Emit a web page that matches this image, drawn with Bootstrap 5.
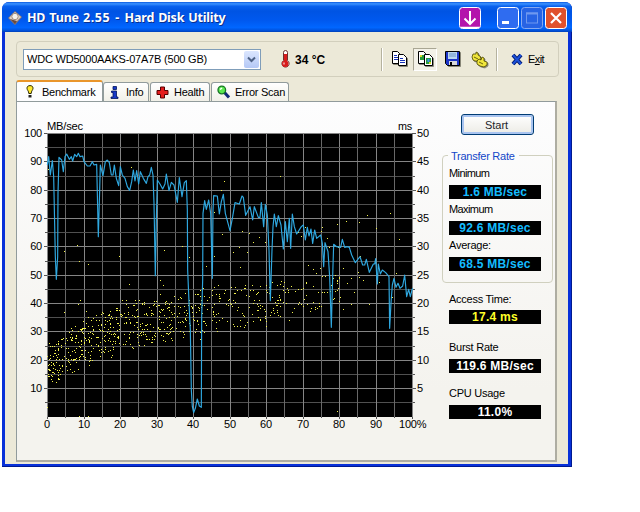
<!DOCTYPE html>
<html lang="en">
<head>
<meta charset="utf-8">
<title>HD Tune 2.55 - Hard Disk Utility</title>
<link href="https://cdn.jsdelivr.net/npm/bootstrap@5.3.0/dist/css/bootstrap.min.css" rel="stylesheet">
<style>
body{background:#fff;font:11px/14px "Liberation Sans",Arial,sans-serif;letter-spacing:-.25px;color:#000;overflow:hidden}
.win{width:570px;height:465px;margin:2px 0 0 2px;background:#0831d9;border-radius:7px 7px 0 0;padding:0 4px 3px 3px;box-shadow:inset -1px -1px #001a90}
.titlebar{height:30px;margin:0 -4px 0 -3px;padding:2px 5px 0 5px;border-radius:7px 7px 0 0;background:linear-gradient(#0a5ae0 0,#3c93ff 6%,#0a62ee 14%,#0054e3 30%,#0058ee 60%,#0066ff 85%,#0054e0 94%,#0040b8 100%)}
.caption{font:bold 12.5px/18px "Noto Sans","Open Sans",sans-serif;letter-spacing:-.2px;word-spacing:1px;color:#fff;text-shadow:1px 1px #0a2f8c;white-space:nowrap}
.caption .ver{letter-spacing:.6px}
.client{background:#ece9d8;height:432px;padding:9px 10px 0 11px}
.toolbox{height:36px;width:543px;border:1px solid #d2cfbd;border-radius:4px;padding:0 0 0 6px}
.combo{width:238px;height:21px;border:1px solid #7f9db9;background:#fff;padding-left:3px;letter-spacing:-.2px}
.drop{width:15px;height:17px;margin-right:1px;border-radius:2px;background:linear-gradient(#dbe6fe,#b4c8f6)}
.vsep{width:2px;height:23px;background:#b5b29f;border-right:1px solid #fff}
.pressed{width:24px;height:23px;border:1px solid;border-color:#a9a693 #fff #fff #a9a693;background:#f3f1e7}
.ico{filter:drop-shadow(1px 1px 0 rgba(70,68,55,.6))}
.tabs{height:24px;padding-top:4px}
.tabx{height:19px;margin-top:1px;border:1px solid #919b9c;border-bottom:0;border-radius:3px 3px 0 0;background:linear-gradient(#fff,#f1f0e8);white-space:nowrap}
.tabx.on{height:21px;margin-top:-1px;border-top:2px solid #e9952b;background:#fdfdfe;margin-bottom:-1px;position:relative;z-index:1}
.pane{height:361px;width:541px;border:1px solid #919b9c;border-right:2px solid #aeada2;border-bottom:2px solid #aeada2;background:linear-gradient(#fdfdfe,#f4f3ee 80%)}
.chart{display:block;letter-spacing:-.2px}
.side{width:112px;padding-top:12px}
.startbtn{width:73px;height:21px;margin-left:19px;border:1px solid #003c74;border-radius:3px;background:linear-gradient(#fff,#ecebe5);box-shadow:inset 0 0 0 2px #a9c4f0;padding:0 2px 0 0;font-size:11px;line-height:18px}
.group{height:128px;width:111px;margin-top:20px;border:1px solid #d0d0bf;border-radius:4px;padding-left:6px}
.legendx{margin:-7px 0 0 -1px;padding:0 3px;width:71px;background:#fbfbfb;color:#1246c8;white-space:nowrap}
.lbl{height:14px;line-height:14px}
.val{width:92px;height:14px;background:#000;text-align:center;font:bold 12px/14px "Liberation Sans",Arial,sans-serif;letter-spacing:.25px;white-space:nowrap}
.cy{color:#14bcff}.ye{color:#ffff28}.wh{color:#fff}
.tight{letter-spacing:-.6px}
</style>
<script src="https://cdn.jsdelivr.net/npm/bootstrap@5.3.0/dist/js/bootstrap.bundle.min.js"></script>
</head>
<body>
<div class="win">
  <header class="titlebar d-flex align-items-center">
    <svg width="16" height="16" viewBox="0 0 16 16"><path d="M1 8 8 1l7 6-7 8z" fill="#8b7770"/><path d="M2 8 8 2l6 5-6 6z" fill="#ddd0c4"/><circle cx="8" cy="6.500" r="3.200" fill="#f7f1ea" stroke="#a08c80"/><path d="m3 9 5 5 2-3z" fill="#6a4a40"/></svg>
    <span class="caption ms-1">HD Tune <span class="ver">2.55 - </span>Hard Disk Utility</span>
    <svg class="ms-auto" width="22" height="22"><rect x=".5" y=".5" width="21" height="21" rx="3" fill="#b414ac" stroke="#fff"/><path d="M11 4v13M5.500 11.500l5.500 5.500 5.500-5.500" fill="none" stroke="#fff" stroke-width="2"/><path d="M2 20.500h18" stroke="#fff" stroke-width="1.500"/></svg>
    <svg style="margin-left:16px" width="22" height="22"><rect x=".5" y=".5" width="21" height="21" rx="3" fill="#2f6cf0" stroke="#fff"/><path d="M5 15.500h7" stroke="#fff" stroke-width="3"/></svg>
    <svg style="margin-left:2px" width="22" height="22"><rect x=".5" y=".5" width="21" height="21" rx="3" fill="#2763e4" stroke="#86a9f0"/><rect x="5.500" y="6" width="11" height="10" fill="none" stroke="#6f98ef"/><path d="M5 6.500h12" stroke="#6f98ef" stroke-width="2"/></svg>
    <svg style="margin-left:2px" width="22" height="22"><rect x=".5" y=".5" width="21" height="21" rx="3" fill="#e0512c" stroke="#fff"/><path d="m6 6 10 10M16 6 6 16" stroke="#fff" stroke-width="2.200"/></svg>
  </header>
  <main class="client">
    <div class="toolbox d-flex align-items-center">
      <div class="combo d-flex align-items-center"><span>WDC WD5000AAKS-07A7B (500 GB)</span>
        <span class="drop ms-auto d-flex align-items-center justify-content-center"><svg width="9" height="7"><path d="m1 1.500 3.500 3.500L8 1.500" fill="none" stroke="#4d6185" stroke-width="2"/></svg></span></div>
      <svg style="margin-left:19px" width="10" height="18"><path d="M3.500 2.500q0-2 2-2t2 2v8a3.600 3.600 0 1 1-4 0z" fill="#fff" stroke="#6b3030"/><path d="M5.500 4v10" stroke="#d81c1c" stroke-width="3"/><circle cx="5.200" cy="13.800" r="3.200" fill="#d81c1c"/><path d="M4 12.500v2" stroke="#fff"/></svg>
      <b style="margin:2px 0 0 5px;font-size:12px;letter-spacing:0;white-space:nowrap">34 °C</b>
      <div class="vsep ms-auto"></div>
      <svg class="ico" style="margin-left:8px" width="17" height="16"><g stroke="#000"><path d="M1.500.5h5l2 2v10h-7z" fill="#fff"/><path d="M7.500 3.500h5l3 3v8h-8z" fill="#fff"/></g><path d="M3 4.500h3M3 6.500h4M3 8.500h4M9 7.500h3M9 9.500h5M9 11.500h5" stroke="#1732b8"/></svg>
      <div class="pressed d-flex align-items-center justify-content-center" style="margin-left:5px"><svg class="ico" width="17" height="16"><g stroke="#000" fill="#fff"><path d="M1.500.5h5l2 2v10h-7z"/><path d="M7.500 3.500h5l3 3v8h-8z"/></g><path d="M3 4h4v5H3zM9 7h5v6H9z" fill="#279a3c"/><path d="M10.500 8h2v3h-2z" fill="#3d8df0"/><path d="M3 4h2v2H3zM12 11h2v2h-2z" fill="#d8d82c"/></svg></div>
      <svg class="ico" style="margin-left:8px" width="17" height="16"><path d="M.5.5h14v14h-12l-2-2z" fill="#1d35c8" stroke="#000"/><path d="M3 1h9v7H3z" fill="#b9d6f0"/><path d="M4 10h8v4H4z" fill="#d8d8d8"/><path d="M5 11h2v3H5z" fill="#000"/><path d="M4 3h7M4 5h7" stroke="#6c94c8"/></svg>
      <svg class="ico" style="margin-left:9px" width="18" height="17"><g fill="#f0e63c" stroke="#4c4600" stroke-width=".8"><path d="m1 6 1-3 3 0 0-2 2 1 0 2 2 1 1 3-2 2-4 0-2-1z"/><path d="m6 10 2-2 2 1 1-3 2 1 0 3 3 1 0 3-3 2-4-1-3-2z"/></g><path d="m3 6 4 2M8 11l4 2" stroke="#6b6410"/></svg>
      <div class="vsep" style="margin-left:7px"></div>
      <svg style="margin-left:13px" width="12" height="13"><path d="m2 2 8 9M10 2l-8 9" stroke="#001a70" stroke-width="4"/><path d="m2 2 8 9M10 2l-8 9" stroke="#1c50d8" stroke-width="2"/></svg>
      <span style="margin:0 14px 0 5px;letter-spacing:-.6px">E<u>x</u>it</span>
    </div>
    <nav class="tabs d-flex">
      <div class="tabx on d-flex align-items-center" style="width:87px;padding-left:9px"><svg width="8" height="13"><path d="M4 .6c2 0 3 1 3 2.700C7 5 5.200 6 5.200 8.500H2.800C2.800 6 1 5 1 3.300 1 1.600 2 .6 4 .6z" fill="#ffe92e" stroke="#2a2600"/><path d="M2.500 10h3v2.500h-3z" fill="#222"/></svg><span style="margin-left:8px">Benchmark</span></div>
      <div class="tabx d-flex align-items-center" style="width:46px;padding-left:6px"><svg width="9" height="13"><path d="M3 .5h3.500v3H3zM1.500 5h5v6h1.500v1.500h-7V11h2V6.500H1.500z" fill="#1738c8" stroke="#00145c" stroke-width=".8"/></svg><span style="margin-left:7px">Info</span></div>
      <div class="tabx d-flex align-items-center" style="width:60px;padding-left:5px;margin-left:1px"><svg width="13" height="13"><path d="M4.500 1h4v3.500H12v4H8.500V12h-4V8.500H1v-4h3.500z" fill="#e41c1c" stroke="#500"/></svg><span style="margin-left:5px">Health</span></div>
      <div class="tabx d-flex align-items-center" style="width:78px;padding-left:5px;margin-left:1px"><svg width="13" height="14"><path d="m7 7 5 5.500" stroke="#122a78" stroke-width="3"/><circle cx="4.800" cy="5" r="3.800" fill="#5cea50" stroke="#177524" stroke-width="1.300"/><path d="M3 4.500 5 3" stroke="#fff" stroke-width="1.500"/></svg><span style="margin-left:5px">Error Scan</span></div>
    </nav>
    <section class="pane d-flex">
      <svg class="chart" width="425" height="357" viewBox="17 102 425 357" font-family="Liberation Sans,Arial,sans-serif" font-size="11">
        <rect x="47" y="133" width="366" height="284"/>
        <g id="grid" shape-rendering="crispEdges"></g>
        <g id="dots" fill="#f2f24c" shape-rendering="crispEdges"></g>
        <polyline transform="translate(10 110) scale(.33333)" fill="none" stroke="#2fa8e0" stroke-width="3.500" stroke-linejoin="round" points="112,165 116,140 121,195 127,152 131,200 136,440 139,508 143,440 144,250 147,142 155,150 160,185 165,140 170,132 178,148 184,140 188,153 194,133 200,140 205,130 210,140 218,138 222,155 232,168 240,168 247,155 252,165 260,163 265,380 269,240 271,165 279,197 286,155 292,150 298,158 304,195 309,195 313,165 319,205 326,227 331,170 337,195 345,205 352,230 359,241 365,215 370,180 375,213 380,182 386,222 391,185 400,205 409,220 414,200 419,195 424,172 429,195 432,280 436,497 439,330 442,210 450,222 458,237 465,222 469,192 477,242 484,217 492,225 502,277 508,203 516,260 523,218 529,212 532,300 533,480 538,600 541,660 544,840 547,890 551,908 556,895 562,867 568,888 574,892 575,620 578,510 579,310 584,272 589,298 596,270 602,310 607,505 609,300 611,257 622,258 628,312 634,275 640,253 646,310 660,362 668,320 675,278 688,282 696,258 700,262 707,316 720,290 728,330 733,290 745,322 750,322 754,278 761,350 766,283 772,315 777,420 781,572 786,420 789,350 793,312 799,350 805,317 813,345 820,417 826,335 832,395 838,325 842,415 847,312 853,350 860,372 874,350 880,345 886,390 892,352 897,378 903,357 908,400 914,360 920,385 932,375 937,400 941,470 945,398 954,425 959,500 964,652 968,500 971,403 980,410 992,412 997,388 1004,412 1012,410 1018,412 1025,435 1036,458 1050,440 1058,465 1064,465 1069,448 1078,487 1090,462 1094,462 1097,446 1102,522 1105,462 1111,492 1117,480 1127,488 1137,500 1139,655 1143,580 1147,525 1152,505 1158,532 1164,520 1170,535 1178,528 1184,495 1190,560 1196,538 1201,560 1206,540 1208,535"/>
        <text x="47" y="130" textLength="36" lengthAdjust="spacingAndGlyphs">MB/sec</text><text x="398" y="130" textLength="14" lengthAdjust="spacingAndGlyphs">ms</text>
        <g id="axes" letter-spacing="-.2"></g>
      </svg>
      <div class="side">
        <button class="startbtn btn d-block">Start</button>
        <div class="group">
          <div class="legendx">Transfer Rate</div>
          <div class="lbl tight" style="margin-top:3px">Minimum</div><div class="val cy" style="margin-top:5px">1.6 MB/sec</div>
          <div class="lbl tight" style="margin-top:3px">Maximum</div><div class="val cy" style="margin-top:5px">92.6 MB/sec</div>
          <div class="lbl" style="margin-top:3px">Average:</div><div class="val cy" style="margin-top:5px">68.5 MB/sec</div>
        </div>
        <div style="padding-left:7px">
          <div class="lbl" style="margin-top:9px">Access Time:</div><div class="val ye" style="margin-top:4px">17.4 ms</div>
          <div class="lbl" style="margin-top:16px">Burst Rate</div><div class="val wh" style="margin-top:5px">119.6 MB/sec</div>
          <div class="lbl" style="margin-top:13px">CPU Usage</div><div class="val wh" style="margin-top:5px">11.0%</div>
        </div>
      </div>
    </section>
  </main>
</div>
<script>
const X = p => 47 + p * 3.65, Y = v => 416.5 - v * 2.835;
let grid = '', axes = '';
for (let i = 0; i <= 20; i++) {
  const x = Math.round(X(i * 5)), y = Math.round(Y(i * 5)), c = i % 2 ? '#505050' : '#858585';
  grid += `<path d="M${x + .5} 133V417" stroke="${i % 2 ? '#686868' : '#858585'}"/>`;
  if (i) grid += `<path d="M47 ${y + .5}H413" stroke="${c}"/>`;
  if (i) grid += `<path d="M${i % 2 ? 45 : 44} ${y + .5}h3M412 ${y + .5}h${i % 2 ? 3 : 4}" stroke="#555"/>`;
  grid += `<path d="M${x + .5} 417v${i % 2 ? 1 : 2}" stroke="#555"/>`;
  if (i % 2 === 0) {
    if (i) axes += `<text x="42" y="${y + 4}" text-anchor="end">${i * 5}</text><text x="417" y="${y + 4}">${i * 2.5}</text>`;
    axes += i === 20 ? `<text x="399" y="428">100%</text>` : `<text x="${x}" y="428" text-anchor="middle">${i * 5}</text>`;
  }
}
document.getElementById('grid').innerHTML = grid;
document.getElementById('axes').innerHTML = axes;

// access-time samples: a band that rises with the seek distance, then single outliers
let seed = 4711;
const rnd = () => (seed = (seed * 16807) % 2147483647) / 2147483647;
const lo = [10, 17, 21.5, 24.500, 26.5, 29, 31, 35, 38, 40], hi = [26, 36, 42, 43, 46, 48, 48.500, 50, 52, 53];
let dots = '';
const dot = (x, y) => dots += `<rect x="${Math.round(x)}" y="${Math.round(y)}" width="1" height="1"/>`;
for (let n = 0; n < 940; n++) {
  const p = Math.pow(rnd(), 1.15) * 80, k = Math.floor(p / 10), f = p / 10 - k;
  const a = lo[k] + (lo[k + 1] - lo[k]) * f, b = hi[k] + (hi[k + 1] - hi[k]) * f;
  if (rnd() < p / 110 - .1) continue;
  dot(X(p), Y(a + (b - a) * (rnd() * .8 + rnd() * .2)));
}
[[115,178],[163,424],[202,406],[206,454],[235,463],[328,439],[364,172],[463,421],[515,408],[538,442],[577,478],[589,468],[613,307],[634,241],[643,214],[637,373],[613,438],[811,199],[695,364],[718,370],[730,397],[748,382],[670,425],[686,410],[712,427],[691,472],[766,395],[886,352],[937,352],[952,385],[982,343],[1009,334],[1048,337],[1072,316],[1099,355],[1141,310],[1168,388],[895,466],[910,478],[919,488],[931,475],[958,412],[985,410],[1051,438],[1043,487],[974,496],[1000,475],[1024,505],[1060,510],[1078,583],[1000,598],[1022,583],[990,560],[1048,500],[1147,562],[1157,490],[1108,515],[358,523],[450,511],[460,526],[163,607],[211,571],[205,583],[229,603],[112,892],[208,919],[235,919],[982,904],[865,365],[872,378],[932,362],[1033,545],[1012,520]]
  .forEach(q => dot(10 + q[0] / 3, 110 + q[1] / 3));
document.getElementById('dots').innerHTML = dots;
</script>
</body>
</html>
